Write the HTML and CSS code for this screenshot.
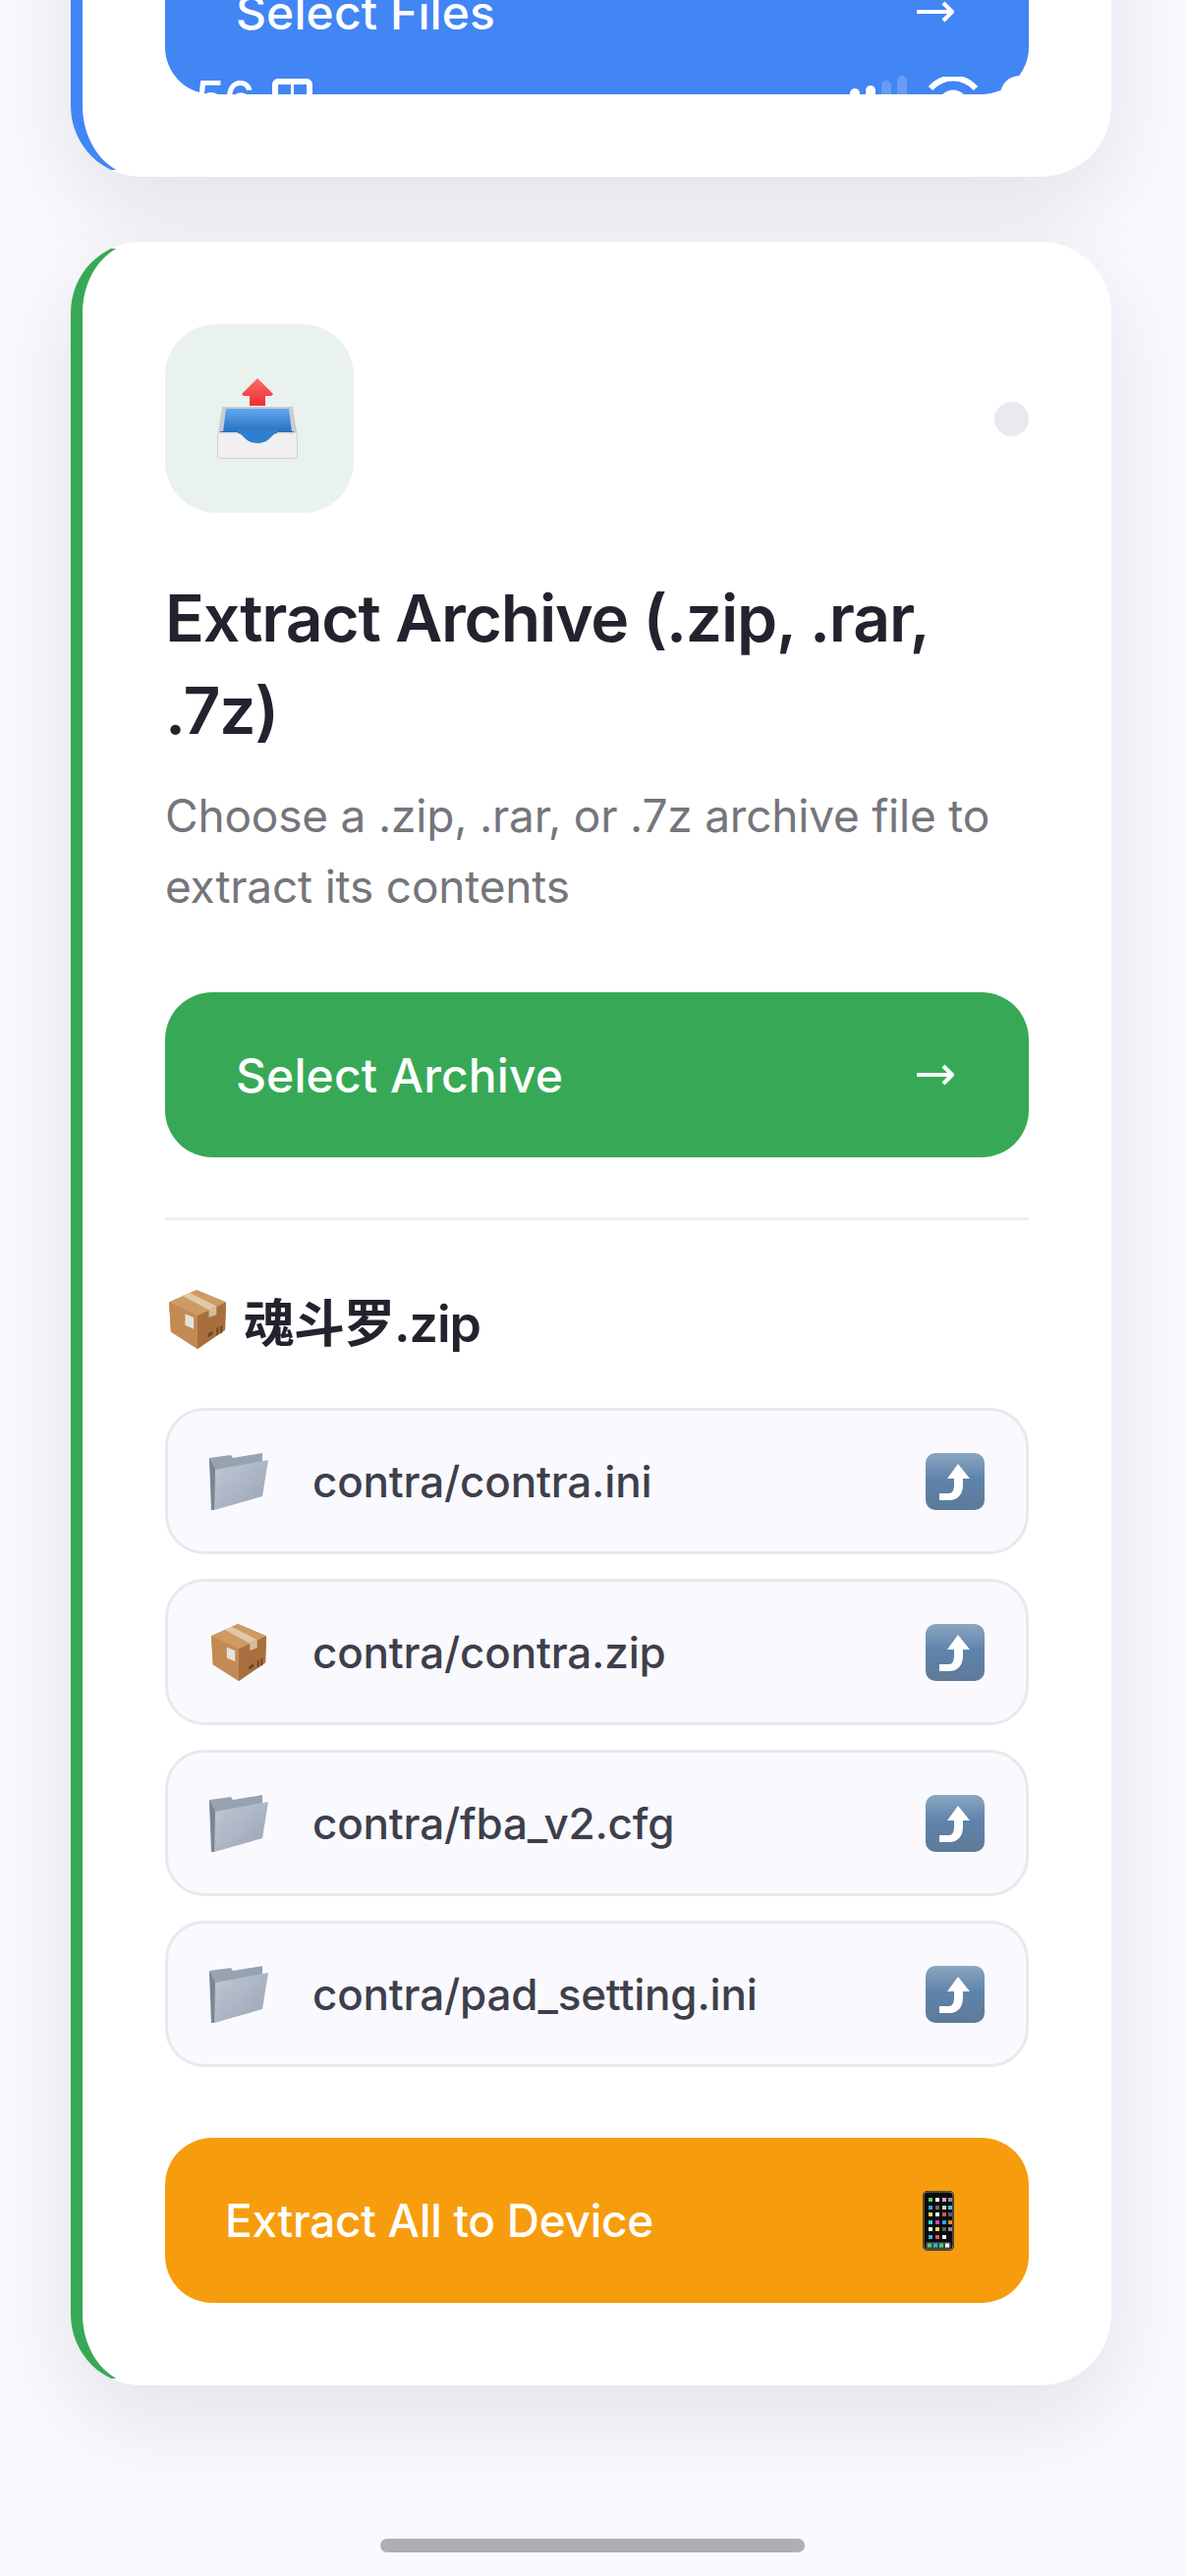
FILE: index.html
```html
<!DOCTYPE html>
<html>
<head>
<title>Extract Archive</title>
<link rel="stylesheet" href="styles.css">
</head>
<body>
	<svg class="defs" aria-hidden="true">
		<defs>
			<linearGradient id="gFolder" x1="0" y1="0" x2="1" y2="1"><stop offset="0" stop-color="#c0c9d5"/><stop offset="1" stop-color="#98a3b4"/></linearGradient>
			<linearGradient id="gSquare" x1="0" y1="0" x2="0" y2="1"><stop offset="0" stop-color="#8aa6c0"/><stop offset=".45" stop-color="#5f84ad"/><stop offset="1" stop-color="#5e7a97"/></linearGradient>
			<linearGradient id="gTray" x1="0" y1="0" x2="0" y2="1"><stop offset="0" stop-color="#62a8f2"/><stop offset="1" stop-color="#2470bd"/></linearGradient>
			<linearGradient id="gRed" x1="0" y1="0" x2="0" y2="1"><stop offset="0" stop-color="#ff6a68"/><stop offset="1" stop-color="#ec2f33"/></linearGradient>
		</defs>
		<symbol id="i-arrow" viewBox="0 0 38 22">
			<path d="M0 11H36M27 2L36 11L27 20" fill="none" stroke="#fff" stroke-width="4.200"/>
		</symbol>
		<symbol id="i-box" viewBox="0 0 60 62">
			<path d="M0 13L29 0L60 13L59 42L30 62L2 44Z" fill="#b97f48"/>
			<path d="M0 13L30 27L30 62L2 44Z" fill="#c48a54"/>
			<path d="M60 13L30 27L30 62L59 42Z" fill="#a76f3d"/>
			<path d="M0 13L29 0L60 13L30 27Z" fill="#cf9a64"/>
			<path d="M14 6L22 3L50 17L42 21Z" fill="#dfc9a8"/>
			<path d="M42 21L50 17L50 26L42 29Z" fill="#d6bd99"/>
			<path d="M17 25L26 29L26 41L17 37Z" fill="#e4e2dc"/>
			<path d="M41 46L46 43V47L41 50ZM50 40L52 39V47L50 48ZM54 38L56 37V45L54 46Z" fill="#6f4524"/>
		</symbol>
		<symbol id="i-folder" viewBox="0 0 60 58">
			<path d="M0 5L22 2L24 5L54 0V40L3 58Z" fill="#98a3b2"/>
			<path d="M6 17L60 7L54 44L5 58Z" fill="url(#gFolder)"/>
			<path d="M0 5L6 17L5 58H2Z" fill="#7a8595"/>
		</symbol>
		<symbol id="i-curve" viewBox="0 0 60 58">
			<rect width="60" height="58" rx="10" fill="url(#gSquare)"/>
			<path d="M33 11L45 26H38V32C38 42 33 48 24 48H14V41H24C27 41 29 38 29 32V26H22Z" fill="#fff"/>
		</symbol>
		<symbol id="i-inbox" viewBox="0 0 82 82">
			<path d="M41 0L57 16L55 18H49V28H33V18H27L25 16Z" fill="url(#gRed)"/>
			<path d="M5 29H77L81 55H1Z" fill="#c9ccd4"/>
			<path d="M9 31H73L76 55H6Z" fill="url(#gTray)"/>
			<path d="M3 54H78V55H3Z" fill="#2f6fae"/>
			<path d="M0.500 56H21C27 56 28 66 41 66C54 66 55 56 61 56H81.500V79Q81.500 81.500 79 81.500H3Q0.500 81.500 0.500 79Z" fill="#f1eff1" stroke="#d2d1d4"/>
			<path d="M21 56C27 56 28 66 41 66C54 66 55 56 61 56L62 52H20Z" fill="#2f7fd0"/>
		</symbol>
		<symbol id="i-phone" viewBox="0 0 32 61">
			<rect width="32" height="61" rx="5" fill="#0c0c0c"/>
			<rect x="1" y="1" width="30" height="59" rx="4" fill="none" stroke="#8f8066" stroke-width="1"/>
			<path d="M6 7h4v4H6z" fill="#5ad178"/><path d="M13 7h4v4h-4z" fill="#fff"/><path d="M20 7h4v4h-4z" fill="#c7a8e8"/><path d="M26 7h4v4h-4z" fill="#8e8e8e"/>
			<path d="M6 15h4v4H6z" fill="#35a6e8"/><path d="M13 15h4v4h-4z" fill="#6c6c6c"/><path d="M20 15h4v4h-4z" fill="#d8cfc0"/><path d="M26 15h4v4h-4z" fill="#35c5ef"/>
			<path d="M6 22h4v4H6z" fill="#f5cf6a"/><path d="M13 22h4v4h-4z" fill="#fff"/><path d="M20 22h4v4h-4z" fill="#d0564e"/><path d="M26 22h4v4h-4z" fill="#5d5d5d"/>
			<path d="M6 30h4v4H6z" fill="#3ccfc4"/><path d="M13 30h4v4h-4z" fill="#c743c9"/><path d="M20 30h4v4h-4z" fill="#2aa4e0"/><path d="M26 30h4v4h-4z" fill="#f08a12"/>
			<path d="M6 37h4v4H6z" fill="#fff"/><path d="M13 37h4v4h-4z" fill="#f2dc4c"/><path d="M20 37h4v4h-4z" fill="#55625a"/><path d="M26 37h4v4h-4z" fill="#8e8e8e"/>
			<path d="M6 45h4v4H6z" fill="#2eb2e8"/><path d="M13 45h4v4h-4z" fill="#e0505a"/><path d="M20 45h4v4h-4z" fill="#fff"/>
			<rect x="3" y="52" width="26" height="7" rx="2" fill="#3b4a42"/>
			<path d="M5 53.500h4v4H5z" fill="#4fce6e"/><path d="M11 53.500h4v4h-4z" fill="#2eb2e8"/><path d="M17 53.500h4v4h-4z" fill="#4fce6e"/><path d="M23 53.500h4v4h-4z" fill="#fff"/>
		</symbol>
	</svg>

	<div class="page">
		<section class="card card-clipped card-blue">
			<button class="btn btn-blue"><span>Select Files</span><svg class="arrow"><use href="#i-arrow"/></svg></button>
		</section>

		<section class="card card-green">
			<div class="card-head">
				<div class="icon-box"><svg class="inbox"><use href="#i-inbox"/></svg></div>
				<span class="dot"></span>
			</div>
			<h2 class="card-title">Extract Archive (.zip, .rar, .7z)</h2>
			<p class="card-desc">Choose a .zip, .rar, or .7z archive file to extract its contents</p>
			<button class="btn btn-green"><span>Select Archive</span><svg class="arrow"><use href="#i-arrow"/></svg></button>
			<div class="divider"></div>
			<div class="zip-name"><svg class="zip-icon"><use href="#i-box"/></svg><span>魂斗罗.zip</span></div>
			<ul class="file-list">
				<li class="file-row"><svg class="file-icon"><use href="#i-folder"/></svg><span class="file-name">contra/contra.ini</span><svg class="file-act"><use href="#i-curve"/></svg></li>
				<li class="file-row"><svg class="file-icon"><use href="#i-box"/></svg><span class="file-name">contra/contra.zip</span><svg class="file-act"><use href="#i-curve"/></svg></li>
				<li class="file-row"><svg class="file-icon"><use href="#i-folder"/></svg><span class="file-name">contra/fba_v2.cfg</span><svg class="file-act"><use href="#i-curve"/></svg></li>
				<li class="file-row"><svg class="file-icon"><use href="#i-folder"/></svg><span class="file-name">contra/pad_setting.ini</span><svg class="file-act"><use href="#i-curve"/></svg></li>
			</ul>
			<button class="btn btn-orange"><span>Extract All to Device</span><svg class="phone"><use href="#i-phone"/></svg></button>
		</section>
	</div>

	<div class="statusbar">
		<span class="status-time">56</span>
		<span class="status-grid"></span>
		<span class="status-right">
			<i class="sig sig-1"></i><i class="sig sig-2"></i><i class="sig sig-3"></i><i class="sig sig-4"></i>
			<svg class="wifi" viewBox="0 0 50 26"><path d="M2 12C15 -2 35 -2 48 12" fill="none" stroke="#fff" stroke-width="6"/><path d="M13 24C20 14 30 14 37 24" fill="none" stroke="#fff" stroke-width="6"/></svg>
		</span>
	</div>
	<span class="battery"></span>

	<div class="home-bar"></div>
</body>
</html>
```

FILE: styles.css
```css
*{
	box-sizing: border-box;
}
html,body{
	margin: 0;
	padding: 0;
	height: 2622px;
	overflow: hidden;
}
body{
	background: #f9f9fe;
	font-family: Inter, "Noto Sans CJK SC", sans-serif;
	position: relative;
}
.defs{
	position: absolute;
	width: 0;
	height: 0;
}
.page{
	padding: 0 75px 0 72px;
	display: flex;
	flex-direction: column;
	gap: 66px;
}
.card{
	position: relative;
	background: #fff;
	border-radius: 72px;
	padding: 84px 84px 84px 96px;
	box-shadow: 0 32px 96px rgba(20,20,40,.1);
}
/* coloured edge, cut short of the card corners */
.card:before{
	content: "";
	position: absolute;
	left: 0;
	top: 0;
	bottom: 0;
	width: 90px;
	border-left: 12px solid #4285f4;
	border-radius: 72px 0 0 72px;
	clip-path: inset(7px 0 7px 0);
}
.card-green:before{
	border-left-color: #37a956;
}
.card-clipped{
	margin-top: -156px;
}
.card-head{
	display: flex;
	justify-content: space-between;
	align-items: center;
}
.icon-box{
	width: 192px;
	height: 192px;
	border-radius: 52px;
	background: #e9f2ec;
	display: flex;
	align-items: center;
	justify-content: center;
	padding-right: 4px;
}
.inbox{
	width: 82px;
	height: 82px;
}
.dot{
	width: 35px;
	height: 35px;
	border-radius: 50%;
	background: #e9e9f0;
}
.card-title{
	margin: 60px 0 0;
	font-size: 66px;
	line-height: 94px;
	font-weight: 600;
	letter-spacing: -1.2px;
	color: #22232e;
}
.card-desc{
	margin: 24px 0 0;
	font-size: 46px;
	line-height: 72px;
	font-weight: 400;
	letter-spacing: -.2px;
	color: #75757c;
}
.btn{
	display: flex;
	width: 100%;
	height: 168px;
	border: none;
	border-radius: 48px;
	padding: 0 76px 0 72px;
	align-items: center;
	justify-content: space-between;
	font-family: inherit;
	font-size: 48px;
	font-weight: 500;
	letter-spacing: .1px;
	color: #fff;
}
.btn-blue{
	background: #4285f4;
}
.btn-green{
	background: #37a956;
	margin-top: 72px;
}
.btn-orange{
	background: #f79c0d;
	margin-top: 72px;
	padding: 0 76px 0 61px;
	font-size: 46px;
	letter-spacing: -.3px;
}
.arrow{
	width: 38px;
	height: 22px;
}
.phone{
	width: 32px;
	height: 61px;
}
.divider{
	height: 3px;
	background: #eeeef2;
	margin-top: 61px;
}
.zip-name{
	display: flex;
	align-items: center;
	gap: 18px;
	margin-top: 70px;
	padding-left: 4px;
	height: 62px;
	font-size: 52px;
	font-weight: 600;
	letter-spacing: -1px;
	color: #22232e;
}
.zip-icon{
	width: 58px;
	height: 62px;
	flex: none;
}
.file-list{
	list-style: none;
	margin: 59px 0 0;
	padding: 0;
	display: flex;
	flex-direction: column;
	gap: 25px;
}
.file-row{
	display: flex;
	align-items: center;
	height: 149px;
	padding: 0 42px 0 42px;
	border: 3px solid #e9e8ee;
	border-radius: 40px;
	background: #f9f9fe;
}
.file-icon{
	width: 60px;
	height: 58px;
	flex: none;
}
.file-name{
	flex: 1;
	margin-left: 45px;
	font-size: 44px;
	font-weight: 500;
	letter-spacing: -.2px;
	color: #3e3f4b;
}
.file-act{
	width: 60px;
	height: 58px;
	flex: none;
}
.statusbar{
	position: absolute;
	top: 70px;
	left: 198px;
	width: 830px;
	height: 26px;
	overflow: hidden;
	display: flex;
	color: #fff;
}
.status-time{
	font-size: 50px;
	line-height: 60px;
	font-weight: 500;
	letter-spacing: -1px;
}
.status-grid{
	position: absolute;
	left: 79px;
	top: 10px;
	width: 41px;
	height: 30px;
	border: 6px solid #fff;
	border-radius: 6px 6px 0 0;
	background: linear-gradient(90deg,transparent 44%,#fff 44%,#fff 56%,transparent 56%);
}
.status-right{
	position: absolute;
	left: 667px;
	top: 0;
	bottom: 0;
	width: 163px;
}
.sig{
	position: absolute;
	width: 10px;
	height: 40px;
	border-radius: 5px;
	background: #fff;
}
.sig-1{ left: 0; top: 20px; }
.sig-2{ left: 16px; top: 17px; }
.sig-3{ left: 32px; top: 12px; opacity: .2; }
.sig-4{ left: 48px; top: 7px; opacity: .2; }
.wifi{
	position: absolute;
	left: 80px;
	top: 8px;
	width: 50px;
	height: 26px;
}
.battery{
	position: absolute;
	left: 1018px;
	top: 77px;
	width: 40px;
	height: 40px;
	border-radius: 50% 0 0 0;
	background: #fff;
}
.home-bar{
	position: absolute;
	left: 387px;
	top: 2584px;
	width: 432px;
	height: 14px;
	border-radius: 7px;
	background: #aeaeb3;
}
```
